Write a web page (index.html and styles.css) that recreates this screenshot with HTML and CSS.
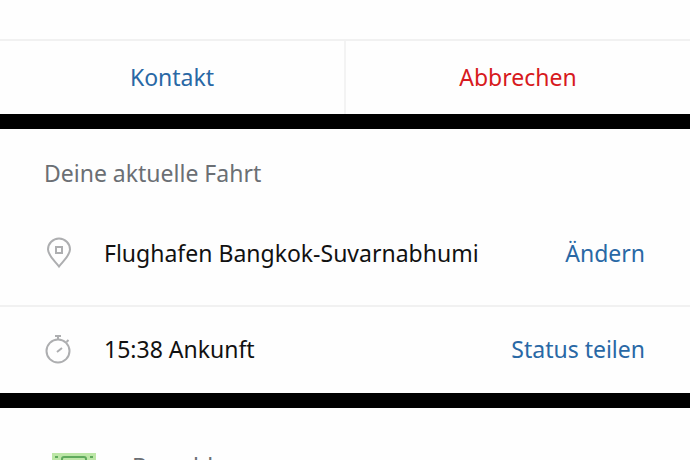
FILE: index.html
```html
<!DOCTYPE html>
<html lang="de">
  <head>
    <meta charset="utf-8">
    <title>Deine aktuelle Fahrt</title>
    <meta name="viewport" content="width=device-width,initial-scale=1">
    <link rel="stylesheet" href="styles.css">
  </head>
  <body>
    <div class="actions">
      <button type="button" class="action">Kontakt</button>
      <button type="button" class="action cancel">Abbrechen</button>
    </div>

    <section class="trip">
      <h2 class="title">Deine aktuelle Fahrt</h2>
      <div class="row">
        <svg class="icon" viewBox="0 0 28 32" aria-hidden="true">
          <path d="M15 29.500 C12 25 4 19 4 12.500 A11 11 0 0 1 26 12.500 C26 19 18 25 15 29.500 Z"/>
          <rect x="12" y="10" width="6" height="6"/>
        </svg>
        <span class="text">Flughafen Bangkok-Suvarnabhumi</span>
        <a class="link" href="#aendern">Ändern</a>
      </div>
      <div class="row last">
        <svg class="icon" viewBox="0 0 28 32" aria-hidden="true">
          <circle cx="14" cy="18" r="11.500"/>
          <path d="M14 6V3M11 3h6M22.500 9l2-2M13 19l5-4"/>
        </svg>
        <span class="text">15:38 Ankunft</span>
        <a class="link" href="#status">Status teilen</a>
      </div>
    </section>

    <section class="payment">
      <svg class="cash" viewBox="0 0 44 26" aria-hidden="true">
        <rect class="note" width="44" height="26"/>
        <path d="M10 22V6q0-2 2-2h20q2 0 2 2v16q0 1-2 1H12q-2 0-2-1z"/>
        <path d="M3 4h3M38 4h3M3 22h3M38 22h3"/>
        <circle cx="22" cy="13" r="4"/>
      </svg>
      <span>Barzahlung</span>
    </section>
  </body>
</html>
```
FILE: styles.css
```css
* {
  box-sizing: border-box;
}
body {
  margin: 0;
  padding-top: 39px;
  height: 100vh;
  overflow: hidden;
  background: #fefefe;
  color: #111;
  font: 23px/32px "Noto Sans", "Open Sans", sans-serif;
}
.actions {
  display: flex;
  border-top: 2px solid #f1f1f1;
}
.action {
  flex: 1;
  height: 73px;
  padding: 0 0 2px;
  border: none;
  background: none;
  color: #2968a5;
  font: inherit;
}
.cancel {
  border-left: 2px solid #f3f3f3;
  color: #d71920;
}
.trip {
  border-top: 15px solid #000;
  border-bottom: 15px solid #000;
}
.title {
  margin: 0;
  padding: 28px 44px 12px;
  color: #6b6f74;
  font-size: 23px;
  font-weight: normal;
}
.row {
  display: flex;
  align-items: center;
  height: 106px;
  padding: 0 45px 0 44px;
  border-bottom: 2px solid #f1f1f1;
}
.last {
  height: 86px;
  padding-bottom: 2px;
  border-bottom: none;
}
.icon {
  width: 28px;
  height: 32px;
  margin-right: 32px;
  fill: none;
  stroke: #adaeb0;
  stroke-width: 2;
}
.text {
  flex: 1;
}
.link {
  color: #2968a5;
  text-decoration: none;
}
.payment {
  display: flex;
  align-items: center;
  gap: 36px;
  padding: 42px 44px 24px 52px;
  color: #6b6f74;
}
.cash {
  width: 44px;
  height: 26px;
  fill: none;
  stroke: #5faa5c;
  stroke-width: 2;
}
.cash .note {
  fill: #bce6a6;
  stroke: none;
}
```
